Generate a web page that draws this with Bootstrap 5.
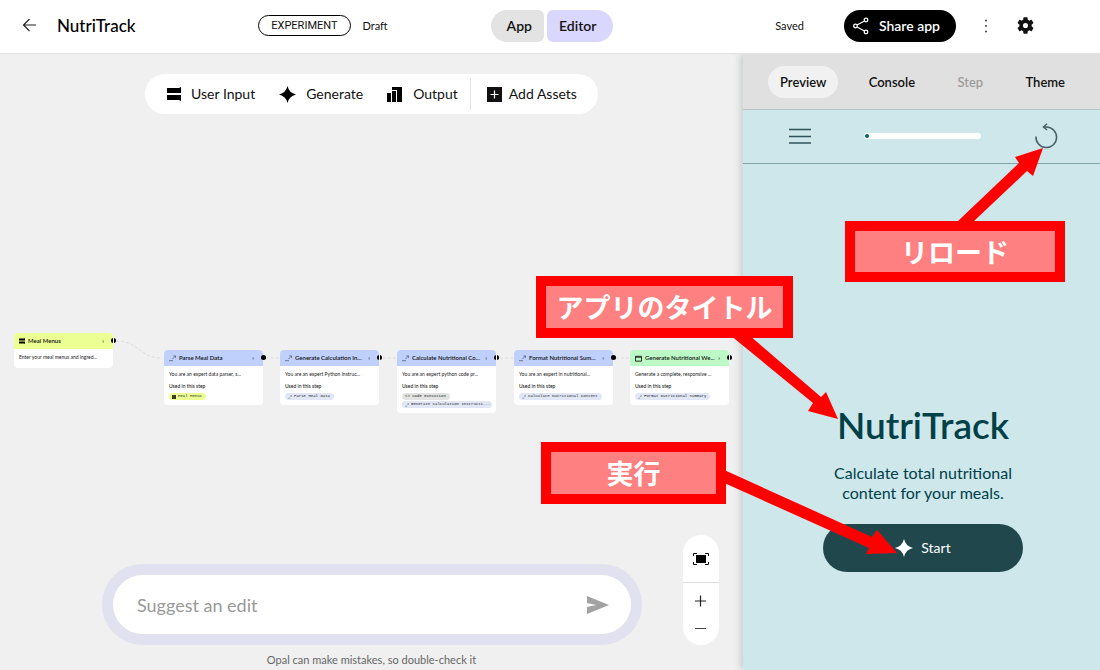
<!DOCTYPE html>
<html lang="en">
<head>
<meta charset="utf-8">
<meta name="viewport" content="width=device-width, initial-scale=1">
<title>NutriTrack</title>
<link href="https://cdn.jsdelivr.net/npm/bootstrap@5.3.0/dist/css/bootstrap.min.css" rel="stylesheet">
<style>
body { font-family: Lato, Roboto, sans-serif; font-size: 14px; line-height: 20px; color: #111; background: #f0f0f0; }
button { font: inherit; color: inherit; border: 0; background: none; padding: 0; }
svg { display: block; flex: none; }

/* top bar */
.topbar { display: grid; grid-template-columns: 1fr auto 1fr; height: 54px; background: #fff; border-bottom: 1px solid #e0e0e0; padding: 0 0 2px 4px; }
.app-name { font-size: 17px; font-weight: 500; color: #000; margin-left: 20px; }
.side-start { padding-left: 18px; }
.side-end { padding-right: 66px; }
.status { gap: 12px; margin-right: 103px; }
.tag { height: 21px; border: 1px solid #000; border-radius: 11px; padding: 0 12px; font: 11px/19px Roboto, sans-serif; }
.note { font-size: 11px; }
.switch { gap: 3px; font-size: 14px; font-weight: 600; }
.switch button { height: 32px; }
.switch .to-app { background: #e3e3e3; border-radius: 16px 6px 6px 16px; padding: 0 12px 0 16px; }
.switch .to-editor { background: #dad7ff; border-radius: 6px 16px 16px 6px; padding: 0 17px 0 12px; }
.share { height: 32px; border-radius: 16px; background: #000; color: #fff; font-weight: 600; padding: 0 16px 0 8px; gap: 9px; margin-left: 40px; }
.dots { margin: 0 23px 0 22px; }

/* canvas */
.board { min-width: 0; }
.tools { top: 20px; left: 0; right: 0; }
.toolbox { height: 40px; border-radius: 20px; background: #fff; padding: 0 21px 0 22px; }
.toolbox button { gap: 10px; margin-right: 24px; }
.toolbox .wide-last { margin: 0; gap: 7px; padding-left: 16px; border-left: 1px solid #e3e3e3; height: 32px; }
.toolbox .output { margin-right: 12px; }

.node { width: 99px; background: #fff; border-radius: 4px; font-size: 5px; line-height: 8px; color: #222; white-space: nowrap; }
.node-head { height: 16px; background: #c0d0fc; border-radius: 4px 4px 0 0; padding: 0 9px 0 5px; font-size: 6px; font-weight: 600; color: #111; gap: 3px; }
.node-head::after { content: "›"; margin-left: auto; }
.node-head.lime { background: #ebff93; }
.node-head.mint { background: #bcf9c6; }
.node-text { padding: 4px 5px 7px; }
.node-text.deep { padding: 4px 5px; }
.node-text.deep > p { margin: 4px 0 3px; font-weight: 500; }
.node-text p { margin: 0; }
.chip { display: flex; align-items: center; gap: 2px; width: fit-content; max-width: 90px; height: 7px; margin-bottom: 1px; padding: 0 4px 0 3px; border-radius: 4px; background: #e2e7f6; font: 500 4px/7px "Liberation Mono", monospace; }
.chip.lime { background: #ebff93; }
.chip.grey { background: #e3e3e3; }
.port { width: 5px; height: 5px; right: -3px; top: 5px; border-radius: 50%; background: #000; }
.port.open { background: linear-gradient(90deg, #000 2px, #fff 2px, #fff 3px, #000 3px); }
.wires { left: 0; top: 0; }

.composer { left: 102px; right: 101px; bottom: 25px; height: 81px; border: 11px solid #e2e1ef; border-radius: 41px; background: #fff; padding: 0 22px 0 24px; }
.composer input { border: 0; outline: 0; background: none; font-size: 18px; line-height: 24px; padding: 0; min-width: 0; }
.composer input::placeholder { color: #999; opacity: 1; }
.disclaimer { left: 0; right: 0; bottom: 0; font-size: 11px; color: #666; }
.zoombar { right: 24px; bottom: 25px; width: 36px; height: 110px; border-radius: 18px; background: #fff; }
.zoombar button { display: flex; justify-content: center; align-items: center; width: 36px; height: 28px; }
.zoombar .fit { height: 48px; border-bottom: 1px solid #ddd; }

/* preview */
.preview { flex: 0 0 357px; background: #cde7eb; box-shadow: -2px 0 8px #c4c8c8; clip-path: inset(0 0 0 -12px); }
.tabs { height: 56px; background: #e0e0e0; border-bottom: 1px solid #b9c6ca; padding: 0 23px 0 25px; font-size: 13px; font-weight: 600; }
.tabs button { height: 32px; border-radius: 16px; padding: 0 12px; }
.tabs .current { background: #f1f1f1; }
.tabs :disabled { color: #999; font-weight: 500; }
.appbar { height: 54px; border-bottom: 1px solid #86a5a9; padding: 0 42px 2px 46px; }
.track { width: 117px; height: 6px; border-radius: 3px; background: #fff; }
.track i { display: block; width: 4px; height: 4px; margin: 1px 0 0 1px; border-radius: 50%; background: #00635f; }
.splash { color: #004046; padding: 0 0 98px 3px; }
.splash h1 { font-size: 37px; line-height: 44px; font-weight: 600; margin: 0 0 16px; }
.splash p { font-size: 16px; line-height: 20px; width: 210px; margin: 0 0 21px; }
.start { width: 200px; height: 48px; border-radius: 24px; background: #20484c; color: #fff; gap: 8px; }

/* callouts over the page */
.callout { display: flex; align-items: center; justify-content: center; border: 10px solid #f00; background: #ff8080; color: #fff; font: 700 27px/38px "Noto Sans CJK JP", sans-serif; z-index: 3; white-space: nowrap; }
.reload { left: 102px; top: 167px; width: 220px; height: 61px; }
.title-tag { left: -207px; top: 222px; width: 257px; height: 62px; }
.run { left: -202px; top: 388px; width: 185px; height: 62px; }
.arrows { left: -43px; top: 0; z-index: 2; pointer-events: none; }
.stage { right: 0; top: 54px; width: 357px; }
</style>
</head>
<body>
<svg class="d-none">
  <symbol id="bars" viewBox="0 0 14 14"><path d="M0 1h12l2-1v6H0zM0 8h14v6l-2-1H0z"/></symbol>
  <symbol id="spark" viewBox="0 0 16 16"><path d="M8 0Q9.500 6.500 16 8Q9.500 9.500 8 16Q6.500 9.500 0 8Q6.500 6.500 8 0z"/></symbol>
  <symbol id="text" viewBox="0 0 8 8"><path d="M0 6.500h4.500M4 4.500L7 1.500M5 1h2.500v2.500" fill="none" stroke="#456" stroke-width=".8"/></symbol>
  <symbol id="web" viewBox="0 0 8 8"><path d="M.5 1.500h7v5.500h-7zM.5 2.500h7" fill="none" stroke="#111"/></symbol>
</svg>
<div class="position-relative d-flex flex-column vh-100 overflow-hidden">
  <header class="topbar align-items-center">
    <div class="side-start d-flex align-items-center">
      <button aria-label="Back"><svg width="15" height="14" viewBox="0 0 15 14" fill="none" stroke="#222" stroke-width="1.200"><path d="M14 6H2M7.500 0L1.500 6l6 6"/></svg></button>
      <span class="app-name">NutriTrack</span>
      <div class="status d-flex align-items-center ms-auto">
        <span class="tag">EXPERIMENT</span><span class="note">Draft</span>
      </div>
    </div>
    <div class="switch d-flex">
      <button class="to-app">App</button><button class="to-editor">Editor</button>
    </div>
    <div class="side-end d-flex align-items-center justify-content-end">
      <span class="note">Saved</span>
      <button class="share d-flex align-items-center">
        <svg width="18" height="18" viewBox="0 0 18 18" fill="none" stroke="#fff" stroke-width="1.300"><circle cx="3.500" cy="9" r="1.800"/><circle cx="14" cy="3" r="1.800"/><circle cx="14" cy="15" r="1.800"/><path d="M5 8l7.500-4M5 10l7.500 4"/></svg>
        Share app</button>
      <button class="dots" aria-label="More"><svg width="16" height="16" viewBox="0 0 16 16" fill="#333"><circle cx="8" cy="2.500" r=".9"/><circle cx="8" cy="8" r=".9"/><circle cx="8" cy="13.500" r=".9"/></svg></button>
      <button aria-label="Settings"><svg width="17" height="17" viewBox="2 2 20 20" fill="#111"><path d="M19.140 12.940c.04-.3.06-.61.06-.94 0-.32-.02-.64-.07-.94l2.030-1.580a.49.49 0 0 0 .12-.61l-1.920-3.320a.49.49 0 0 0-.59-.22l-2.390.96c-.5-.38-1.030-.7-1.620-.94l-.36-2.540a.48.48 0 0 0-.48-.41h-3.840c-.24 0-.43.17-.47.41l-.36 2.540c-.59.24-1.130.57-1.620.94l-2.390-.96a.48.48 0 0 0-.59.22L2.740 8.870c-.12.21-.08.47.12.61l2.030 1.580c-.05.3-.09.63-.09.94s.02.64.07.94l-2.030 1.580a.49.49 0 0 0-.12.61l1.920 3.320c.12.22.37.29.59.22l2.390-.96c.5.38 1.030.7 1.620.94l.36 2.540c.05.24.24.41.48.41h3.840c.24 0 .44-.17.47-.41l.36-2.540c.59-.24 1.130-.56 1.620-.94l2.390.96c.22.08.47 0 .59-.22l1.920-3.320a.48.48 0 0 0-.12-.61zM12 15a3 3 0 1 1 0-6 3 3 0 0 1 0 6z"/></svg></button>
    </div>
  </header>

  <div class="d-flex flex-fill">
    <main class="board position-relative flex-fill">
      <div class="tools position-absolute d-flex justify-content-center">
        <div class="toolbox d-flex align-items-center text-nowrap">
          <button class="d-flex align-items-center"><svg width="14" height="14"><use href="#bars" width="14" height="14"/></svg>User Input</button>
          <button class="d-flex align-items-center"><svg width="17" height="17"><use href="#spark" width="17" height="17"/></svg>Generate</button>
          <button class="output d-flex align-items-center"><svg width="16" height="15" viewBox="0 0 16 15"><path d="M0 6h4v9H0zM5 4h4v11H5zM5 0h10v15h-5V3H5z"/></svg>Output</button>
          <button class="wide-last d-flex align-items-center"><svg width="15" height="15"><path d="M0 0h15v15H0z" fill="#111"/><path d="M7.500 3.500v8M3.500 7.500h8" stroke="#fff" stroke-width="1.200"/></svg>Add Assets</button>
        </div>
      </div>

      <svg class="wires position-absolute" width="740" height="330" fill="none" stroke="#dcdcdc"><path d="M116 287C140 287 138 304 162 304M266 304h14M383 304h14M500 304h14M616 304h14" stroke-dasharray="3 2"/></svg>

      <div class="node position-absolute" style="left:14px;top:279px">
        <div class="node-head lime d-flex align-items-center"><svg width="6" height="6"><use href="#bars"/></svg>Meal Menus</div><i class="port open position-absolute"></i>
        <div class="node-text">Enter your meal menus and ingred...</div>
      </div>
      <div class="node position-absolute" style="left:164px;top:296px">
        <div class="node-head d-flex align-items-center"><svg width="7" height="7"><use href="#text"/></svg>Parse Meal Data</div><i class="port position-absolute"></i>
        <div class="node-text deep">You are an expert data parser, s...<p>Used in this step</p><span class="chip lime"><svg width="4" height="4"><use href="#bars"/></svg>Meal Menus</span></div>
      </div>
      <div class="node position-absolute" style="left:280px;top:296px">
        <div class="node-head d-flex align-items-center"><svg width="7" height="7"><use href="#text"/></svg>Generate Calculation In...</div><i class="port open position-absolute"></i>
        <div class="node-text deep">You are an expert Python instruc...<p>Used in this step</p><span class="chip"><svg width="4" height="4"><use href="#text"/></svg>Parse Meal Data</span></div>
      </div>
      <div class="node position-absolute" style="left:397px;top:296px">
        <div class="node-head d-flex align-items-center"><svg width="7" height="7"><use href="#text"/></svg>Calculate Nutritional Co...</div><i class="port open position-absolute"></i>
        <div class="node-text deep">You are an expert python code pr...<p>Used in this step</p><span class="chip grey">&lt;&gt; Code Execution</span><span class="chip"><svg width="4" height="4"><use href="#text"/></svg>Generate Calculation Instructi...</span></div>
      </div>
      <div class="node position-absolute" style="left:514px;top:296px">
        <div class="node-head d-flex align-items-center"><svg width="7" height="7"><use href="#text"/></svg>Format Nutritional Sum...</div><i class="port position-absolute"></i>
        <div class="node-text deep">You are an expert in nutritional...<p>Used in this step</p><span class="chip"><svg width="4" height="4"><use href="#text"/></svg>Calculate Nutritional Content</span></div>
      </div>
      <div class="node position-absolute" style="left:630px;top:296px">
        <div class="node-head mint d-flex align-items-center"><svg width="7" height="7"><use href="#web"/></svg>Generate Nutritional We...</div><i class="port open position-absolute"></i>
        <div class="node-text deep">Generate a complete, responsive ...<p>Used in this step</p><span class="chip"><svg width="4" height="4"><use href="#text"/></svg>Format Nutritional Summary</span></div>
      </div>

      <form class="composer position-absolute d-flex align-items-center">
        <input class="flex-fill" type="text" aria-label="Suggest an edit" placeholder="Suggest an edit">
        <button type="button" aria-label="Send"><svg width="22" height="18" viewBox="0 0 22 18"><path d="M0 0l22 9L0 18v-7l9-2-9-2z" fill="#a2a2a2"/></svg></button>
      </form>
      <div class="disclaimer position-absolute text-center">Opal can make mistakes, so double-check it</div>

      <div class="zoombar position-absolute">
        <button class="fit" aria-label="Fit to view"><svg width="16" height="12"><path d="M3 2h10v8H3z"/><path d="M.5 3V.5H4M12 .5h3.500V3M.5 9v2.500H4M12 11.500h3.500V9" fill="none" stroke="#000"/></svg></button>
        <button class="mt-1" aria-label="Zoom in"><svg width="12" height="12"><path d="M0 6h11M5.500 .5v11" stroke="#222" stroke-width="1.200"/></svg></button>
        <button aria-label="Zoom out"><svg width="12" height="12"><path d="M0 5.500h11" stroke="#444"/></svg></button>
      </div>
    </main>

    <aside class="preview d-flex flex-column">
      <nav class="tabs d-flex align-items-center justify-content-between">
        <button class="current">Preview</button><button>Console</button><button disabled>Step</button><button>Theme</button>
      </nav>
      <div class="appbar d-flex align-items-center justify-content-between">
        <button aria-label="Menu"><svg width="22" height="16" fill="none" stroke="#2f5358" stroke-width="1.500"><path d="M0 1.500h22M0 8.500h22M0 15h22"/></svg></button>
        <div class="track"><i></i></div>
        <button aria-label="Reload"><svg width="24" height="26" viewBox="0 0 24 26" fill="none" stroke="#476065" stroke-width="1.500"><path d="M2 13.500A10.300 10.300 0 1 0 12.500 4H10M13 .8L9.500 4l3.500 3"/></svg></button>
      </div>
      <section class="splash flex-fill d-flex flex-column align-items-center justify-content-end text-center">
        <h1>NutriTrack</h1>
        <p>Calculate total nutritional content for your meals.</p>
        <button class="start d-flex align-items-center justify-content-center"><svg width="18" height="18" fill="#fff"><use href="#spark"/></svg>Start</button>
      </section>
    </aside>
  </div>

  <div class="stage position-absolute">
    <svg class="arrows position-absolute" width="400" height="520" fill="#f00">
      <path d="M258 167L319 109L315 103L343 94L333 122L327 117L274 167z"/>
      <path d="M30 281L113 349L108 357L138 365L126 338L121 343L49 281z"/>
      <path d="M22 415L172 483L177 476L197 499L166 500L169 494L22 428z"/>
    </svg>
    <div class="callout reload position-absolute">リロード</div>
    <div class="callout title-tag position-absolute">アプリのタイトル</div>
    <div class="callout run position-absolute">実行</div>
  </div>
</div>
<script src="https://cdn.jsdelivr.net/npm/bootstrap@5.3.0/dist/js/bootstrap.bundle.min.js"></script>
</body>
</html>
